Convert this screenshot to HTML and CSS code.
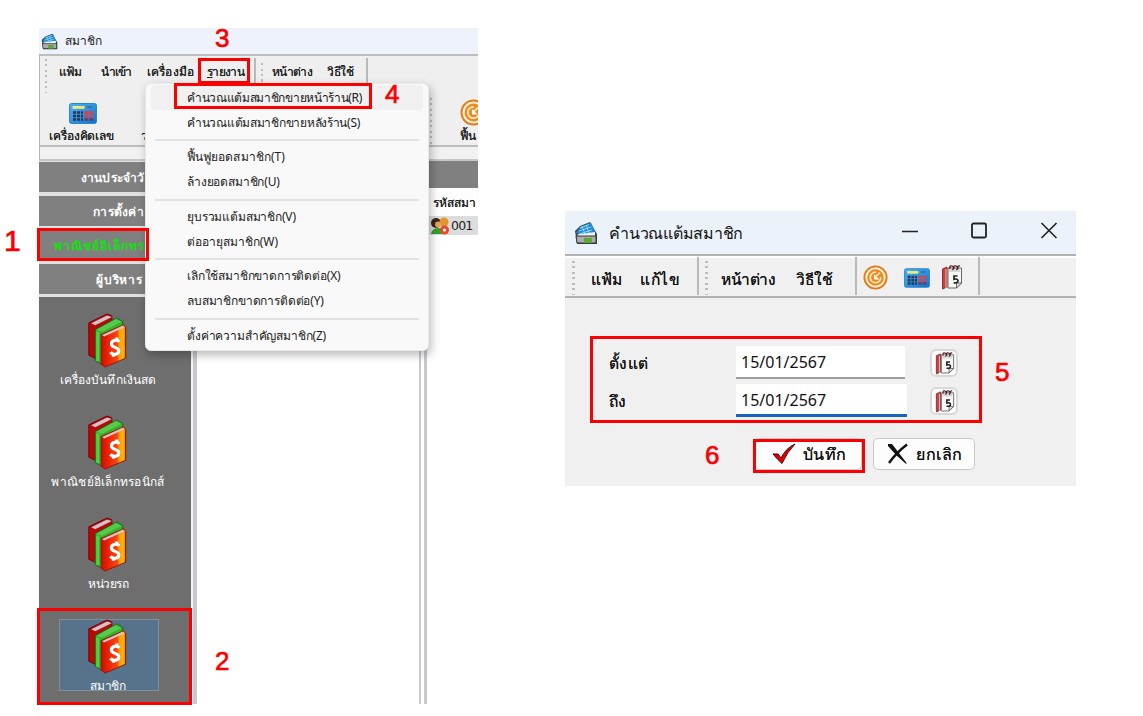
FILE: index.html
```html
<!DOCTYPE html>
<html lang="th">
<head>
<meta charset="utf-8">
<title>สมาชิก</title>
<link rel="stylesheet" href="styles.css">
</head>
<body>
<svg class="defs" width="0" height="0" aria-hidden="true">
  <defs>
    <linearGradient id="red" x1="0" x2="1"><stop offset="0" stop-color="#c80f08"/><stop offset=".35" stop-color="#f02808"/><stop offset=".66" stop-color="#f04a10"/><stop offset=".74" stop-color="#f89a10"/><stop offset=".9" stop-color="#ffb80c"/><stop offset="1" stop-color="#e06a08"/></linearGradient>
    <linearGradient id="blue" x1="0" y1="0" x2="1" y2="1"><stop offset="0" stop-color="#4db4f4"/><stop offset="1" stop-color="#1272cf"/></linearGradient>
    <symbol id="books" viewBox="0 0 40 56">
      <path d="M1.500 10L20 1l5 2v35L8 46l-6.500-3z" fill="#b80808" stroke="#700" stroke-width="1"/>
      <path d="M4 10.500L20 2.500l5 1.500L8 12.500z" fill="#cfc3cb"/>
      <path d="M8 17L30 5l6 4v34L14 52l-6-4z" fill="#2fb52a" stroke="#176312" stroke-width="1"/>
      <path d="M9 17L29 6l6 3L15 19z" fill="#58c94c"/>
      <path d="M10.500 19v30" stroke="#51d044" stroke-width="3"/>
      <path d="M14 22L37 12l2 3v31L18 55l-4-3z" fill="url(#red)" stroke="#9a1206" stroke-width="1"/>
      <path d="M15 22.500L36 13l2 1.500L17 24z" fill="#d8c4cc"/>
      <path d="M32.500 29.500c-2-3-8-2-8 2 0 4.500 7.500 2.500 7.500 7 0 4-6 5-8.500 1.500M30 25v3M26.500 41v3.500" fill="none" stroke="#fff" stroke-width="3.200"/>
    </symbol>
    <symbol id="calc" viewBox="0 0 28 21">
      <rect x=".5" y=".5" width="27" height="20" rx="2" fill="url(#blue)" stroke="#2b86d0"/>
      <path d="M3.500 3h12v2.800h-12z" fill="#f0ec7c"/><path d="M18 4h5" stroke="#2a6a9c" stroke-width="1.500"/>
      <path d="M4 9.500h3M8 9.500h3M12 9.500h2M4 13h3M8 13h3M12 13h2M4 16.500h3M8 16.500h3M12 16.500h2" stroke="#2c3550" stroke-width="2.600"/>
      <path d="M15.500 9.500h4M20.500 9.500h3.500M15.500 13h4M20.500 13h3.500" stroke="#e04040" stroke-width="2.800"/>
      <path d="M15.500 16.500h4M20.500 16.500h3.500" stroke="#6c3a56" stroke-width="2.600"/>
    </symbol>
    <symbol id="refresh" viewBox="0 0 26 26">
      <circle cx="13" cy="13" r="12.500" fill="#e07a14"/><circle cx="13" cy="13" r="10.600" fill="#fff0dc"/>
      <circle cx="13" cy="13" r="8.600" fill="#f08a1c"/>
      <path d="M13.500 7.500a5.500 5.500 0 1 0 5 5M17.500 8l-4 4" fill="none" stroke="#ffe9cf" stroke-width="1.700"/>
      <path d="M11.500 9.500v5.500h5.500z" fill="#fff"/>
    </symbol>
    <symbol id="cal" viewBox="0 0 22 26">
      <path d="M1.500 5l4.500-2v20l-4.500 2z" fill="#d43a3e" stroke="#702024" stroke-width=".8"/>
      <path d="M5 5v19" stroke="#e9c0c0" stroke-width="1"/>
      <path d="M7 4h13.500v15l-5 5H7z" fill="#f7f7f5" stroke="#666" stroke-width="1"/>
      <path d="M20.500 19h-5v5z" fill="#ddd" stroke="#555" stroke-width=".8"/>
      <path d="M8 5h11v3H8z" fill="#d8d8d8"/>
      <path d="M9 5q-1-4 2-3t.5 4M13 5q-1-4 2-3t.5 4M17 5q-1-4 2-3" fill="none" stroke="#4a1c1e" stroke-width="1.300"/>
      <path d="M16.500 12h-3.500v3.300q4-1 4 1.500t-4.300 2" fill="none" stroke="#222" stroke-width="1.700"/>
    </symbol>
    <symbol id="app" viewBox="0 0 24 24">
      <path d="M1 10L6 5l10-4 4 7 3 5v10H3z" fill="#3b474f"/>
      <path d="M2 12l4-6 11-4.500 4 9.500-10 3z" fill="#2389d4"/>
      <path d="M6 7l9-3.500M5 10l12-4M5 13l13-4M8 5l3 8M12 4l3 8" stroke="#9bdcff" stroke-width=".9"/>
      <path d="M2 15h20v7H3z" fill="#a9adad" stroke="#333" stroke-width="1"/>
      <path d="M10 17h8v5h-8z" fill="#62a634"/><path d="M3 13.500l18-2.500v3.500H4z" fill="#eef3f4"/>
    </symbol>
  </defs>
</svg>

<main class="page">
  <section class="win member">
    <header class="title"><svg class="app-sm"><use href="#app"/></svg><span class="t">สมาชิก</span></header>
    <div class="tools">
      <nav class="bar">
        <i class="grip"></i>
        <span class="t m1">แฟ้ม</span><span class="t m2">นำเข้า</span><span class="t m3">เครื่องมือ</span><span class="t m4"><u>ร</u>ายงาน</span>
        <i class="rule r1"></i><i class="grip g2"></i>
        <span class="t m5">หน้าต่าง</span><span class="t m6">วิธีใช้</span><i class="rule r2"></i>
      </nav>
      <div class="actions">
        <div class="action calc"><svg><use href="#calc"/></svg><span class="t">เครื่องคิดเลข</span></div>
        <span class="next">ว</span>
        <i class="grip"></i>
        <div class="action restore"><svg><use href="#refresh"/></svg><span class="t">ฟื้น</span></div>
      </div>
    </div>
    <div class="strip"></div>
    <div class="work">
      <aside class="side">
        <div class="group g-a"><span class="t">งานประจำวั</span></div>
        <div class="group g-b"><span class="t">การตั้งค่า</span></div>
        <div class="group g-c"><span class="t">พาณิชย์อิเล็กทร</span></div>
        <div class="group g-d"><span class="t">ผู้บริหาร</span></div>
        <div class="modules">
          <div class="module x1"><svg><use href="#books"/></svg><span class="t">เครื่องบันทึกเงินสด</span></div>
          <div class="module x2"><svg><use href="#books"/></svg><span class="t">พาณิชย์อิเล็กทรอนิกส์</span></div>
          <div class="module x3"><svg><use href="#books"/></svg><span class="t">หน่วยรถ</span></div>
          <div class="module on"><svg><use href="#books"/></svg><span class="t">สมาชิก</span></div>
        </div>
      </aside>
      <i class="split"></i>
      <div class="canvas"></div>
      <i class="split s2"></i>
      <div class="list">
        <div class="list-head"></div>
        <div class="col"><span class="t">รหัสสมา</span></div>
        <div class="row"><svg viewBox="0 0 19 18"><circle cx="6" cy="6" r="5" fill="#3a2618"/><circle cx="14" cy="5" r="4.500" fill="#e2952e"/><circle cx="8" cy="7.500" r="3" fill="#e8a35c"/><path d="M1 17q1-6 7-6t6 6z" fill="#35a02c"/><circle cx="14.500" cy="13" r="4.500" fill="#e8482c"/><circle cx="14.500" cy="13" r="1.600" fill="#fff"/></svg><span>001</span></div>
      </div>
    </div>
  </section>

  <section class="win points">
    <header class="title"><svg class="app-lg"><use href="#app"/></svg><span class="t">คำนวณแต้มสมาชิก</span>
      <svg class="ctl" viewBox="0 0 160 24"><path d="M1 13.500h16M140.500 5l15 15M155.500 5l-15 15" stroke="#222" stroke-width="1.600"/><rect x="71" y="5.500" width="14" height="14" rx="1.500" fill="none" stroke="#222" stroke-width="1.800"/></svg>
    </header>
    <nav class="bar">
      <i class="grip"></i><span class="t n1">แฟ้ม</span><span class="t n2">แก้ไข</span><i class="rule q1"></i>
      <i class="grip g2"></i><span class="t n3">หน้าต่าง</span><span class="t n4">วิธีใช้</span><i class="rule q2"></i>
      <svg class="i1"><use href="#refresh"/></svg><svg class="i2"><use href="#calc"/></svg><svg class="i3"><use href="#cal"/></svg><i class="rule q3"></i>
    </nav>
    <div class="form">
      <div class="range">
        <div class="field"><label class="t from">ตั้งแต่</label><span class="input">15/01/2567</span><button><svg><use href="#cal"/></svg></button></div>
        <div class="field focus"><label class="t to">ถึง</label><span class="input">15/01/2567</span><button><svg><use href="#cal"/></svg></button></div>
      </div>
      <div class="buttons">
        <div class="btn ok"><svg viewBox="0 0 24 20"><path d="M1 10l5 0 3 4Q14 4 23 0 15 8 10 19.500 5 15 1 10z" fill="#e80000" stroke="#400" stroke-width="1"/></svg><span class="t">บันทึก</span></div>
        <div class="btn no"><svg viewBox="0 0 21 20"><path d="M1 0h4L20 19.500h-1.500Q9 12 1 2z" fill="#111"/><path d="M20 .5Q9 9 2 19" fill="none" stroke="#111" stroke-width="2.400"/></svg><span class="t">ยกเลิก</span></div>
      </div>
    </div>
  </section>

  <div class="menu">
    <div class="item hot"><span class="t">คำนวณแต้มสมาชิกขายหน้าร้าน(R)</span></div>
    <div class="item s"><span class="t">คำนวณแต้มสมาชิกขายหลังร้าน(S)</span></div><hr>
    <div class="item restore-sum"><span class="t">ฟื้นฟูยอดสมาชิก(T)</span></div>
    <div class="item"><span class="t">ล้างยอดสมาชิก(U)</span></div><hr>
    <div class="item"><span class="t">ยุบรวมแต้มสมาชิก(V)</span></div>
    <div class="item renew"><span class="t">ต่ออายุสมาชิก(W)</span></div><hr>
    <div class="item"><span class="t">เลิกใช้สมาชิกขาดการติดต่อ(X)</span></div>
    <div class="item"><span class="t">ลบสมาชิกขาดการติดต่อ(Y)</span></div><hr>
    <div class="item"><span class="t">ตั้งค่าความสำคัญสมาชิก(Z)</span></div>
  </div>

  <i class="mark k1"></i><i class="mark k2"></i><i class="mark k3"></i><i class="mark k4"></i><i class="mark k5"></i><i class="mark k6"></i>
  <b class="num b1">1</b><b class="num b2">2</b><b class="num b3">3</b><b class="num b4">4</b><b class="num b5">5</b><b class="num b6">6</b>
</main>
</body>
</html>
```
FILE: styles.css
```css
*{box-sizing:border-box}
body{margin:0;background:#fff;font:12px/16px "Noto Sans",sans-serif;color:#1c1c1c}
svg{display:block;overflow:visible;flex:none}
.defs{position:absolute}
.page{position:relative;display:flex;align-items:flex-start;width:1143px;height:716px;overflow:hidden}
.win{flex:none;overflow:hidden}
.t{white-space:nowrap;display:inline-block;flex:none}
.title{display:flex;align-items:center;background:#edf2fb}
.grip{flex:none;width:3px;background:repeating-linear-gradient(#bcbcbc 0 2px,transparent 2px 5.500px)}
.rule{flex:none;width:2px;background:#b9b9b9}

/* member window */
.member{width:439px;height:676px;margin:28px 0 0 39px;background:#efefef}
.member .title{height:26px;padding-left:2px}
.app-sm{width:17px;height:17px;margin-right:7px}
.tools{height:93px;border-top:2px solid #bdbdbd;border-left:1px solid #b5b5b5;border-bottom:2px solid #bdbdbd}
.member .bar{display:flex;align-items:center;height:32px;text-shadow:0 0 .5px #333}
.member .bar .grip{height:34px;margin:8px 12px 0 5px;width:2px}
.m1,.m4,.m5{letter-spacing:-.67px}
.m2{margin-left:20px;letter-spacing:-1px}.m3{margin-left:16px;letter-spacing:.14px}.m4{margin-left:13px}
.member .r1{height:28px;margin:0 5px 0 10px}
.member .bar .g2{height:22px;margin:4px 9px 0 0}
.m6{margin-left:15px;letter-spacing:-.25px}
.member .r2{height:28px;margin-left:12px}
.actions{display:flex;height:57px;padding-left:9px;text-shadow:0 0 .5px #333}
.action{display:flex;flex-direction:column;align-items:flex-start;flex:none}
.calc{width:92px}
.calc svg{width:28px;height:21px;margin:15px 0 4px 20px}
.calc .t{letter-spacing:-.1px}
.next{margin-top:40px;width:10px}
.actions .grip{height:48px;width:2px;margin:10px 0 0 282px}
.restore svg{width:27px;height:27px;margin:11px 0 2px 28px}
.restore .t{margin-left:28px}
.strip{height:14px;border-left:1px solid #b5b5b5;border-bottom:2px solid #c6c6c6;background:#f1f1f1}
.work{display:flex;height:543px}
.side{width:152px;flex:none;background:#6e6e6e}
.group{height:34px;border-top:1px solid #e2e2e2;border-bottom:3px solid #e2e2e2;background:#808080;color:#fff;display:flex;align-items:center;overflow:hidden;font-weight:bold;white-space:nowrap;padding-top:2px}
.g-a{padding-left:42px;letter-spacing:.13px}
.g-b{padding-left:54px;letter-spacing:.29px}
.g-c{padding-left:15px;color:#0ce40c;letter-spacing:1px}
.g-d{padding-left:57px;letter-spacing:.83px}
.modules{display:flex;flex-direction:column;align-items:center;padding:16px 0 0 0;margin-left:-13px}
.module{display:flex;flex-direction:column;align-items:center;width:100px;height:72px;margin-bottom:30px;color:#fff}
.module svg{width:40px;height:55px;margin:0 4px 4px 0}
.module .t{margin-right:1px}
.x1{letter-spacing:.14px}.x2{letter-spacing:.27px}.x3{letter-spacing:-.5px}
.module.on{background:#56738b;box-shadow:inset 0 0 0 1px #7d909f;letter-spacing:-.2px}
.split{flex:none;width:6px;background:linear-gradient(90deg,#f4f4f4 2.500px,#c8c8d0 2.500px)}
.canvas{flex:none;width:222px;background:#fff}
.s2{width:10px;background:linear-gradient(90deg,#c8c8d0 2px,#fff 2px 5px,#c8c8d0 5px 8px,#fff 8px)}
.list{flex:1;background:#fff;overflow:hidden}
.list-head{height:27px;background:#808080}
.col{height:28px;padding:7px 0 0 4px;white-space:nowrap;text-shadow:0 0 .5px #333;letter-spacing:-.1px}
.row{display:flex;align-items:center;height:19px;background:#dcdcdc;font:12.500px "DejaVu Sans",sans-serif;letter-spacing:-.8px;padding-left:1px}
.row svg{width:19px;height:18px;margin-right:2px}

/* points window */
.points{width:511px;height:275px;margin:211px 0 0 87px;background:#f0f0f0;color:#111}
.points .title{height:43px;font-size:16px;padding-left:9px;background:#ecf2f9;letter-spacing:-.25px}
.app-lg{width:24px;height:24px;margin-right:11px}
.ctl{width:160px;height:24px;margin:-6px 0 0 158px}
.points .bar{display:flex;align-items:center;height:44px;border-top:2px solid #b2b2b2;border-bottom:2px solid #b2b2b2;font-size:15.500px;line-height:20px;text-shadow:0 0 .6px #222;box-shadow:inset 0 2px #fff}
.points .bar .t{padding-top:6px}
.points .bar .grip{height:34px;margin:4px 16px 0 7px}
.n2{margin-left:18px;letter-spacing:.5px}
.q1{height:38px;margin-left:17px}
.points .bar .g2{margin:4px 13px 0 6px}
.n3{letter-spacing:-.5px}
.n4{margin-left:21px}
.q2{height:38px;margin-left:22px}
.i1{width:25px;height:25px;margin:3px 0 0 6px}
.i2{width:26px;height:20px;margin:3px 0 0 16px}
.i3{width:22px;height:26px;margin:2px 0 0 11px}
.q3{height:38px;margin-left:15px}
.form{padding:47px 0 0 44px}
.range{display:flex;flex-direction:column;gap:5px}
.field{display:flex;align-items:center;height:35px;font-size:16px}
.field+.field{margin-top:-2px}
.field label{font-size:15.500px;text-shadow:0 0 .5px #222;padding-top:1px}
.from{letter-spacing:.25px}.to{letter-spacing:-.5px}
.input{width:169px;height:33px;margin-left:auto;background:#fff;border-bottom:2px solid #a0a0a0;padding:6px 0 0 5px;line-height:20px}
.focus .input{width:171px;border-bottom:3px solid #1464c0;margin-right:-2px}
.field button{width:28px;height:28px;margin:1px 118px 0 25px;padding:0 0 0 3px;border:2px solid #d8d8d8;border-radius:6px;background:#fcfcfc}
.field svg{width:20px;height:24px}
.buttons{display:flex;gap:12px;margin:20px 0 0 146px}
.btn{display:flex;align-items:center;width:107px;height:32px;background:#fdfdfd;border:1px solid #cacaca;border-radius:5px;font-size:16px;line-height:20px;text-shadow:0 0 .6px #222}
.ok{padding-left:16px;letter-spacing:.25px}
.ok svg{width:24px;height:20px;margin-right:7px}
.no{width:102px;padding-left:13px;letter-spacing:.6px;margin-left:-1px}
.no svg{width:21px;height:20px;margin-right:8px}

/* drop-down menu over the member window */
.menu{position:absolute;left:145px;top:83px;width:284px;height:268px;padding-top:1px;background:#f9f9f9;border:1px solid #e8e8e8;border-radius:6px;box-shadow:2px 4px 10px rgba(0,0,0,.28)}
.item{display:flex;align-items:center;height:25px;margin:0 5px;padding-left:36px;border-radius:4px;letter-spacing:-.16px}
.hot{background:#f0f0f0;letter-spacing:-.32px}
.s{letter-spacing:-.28px}
.restore-sum{letter-spacing:.08px}
.renew{letter-spacing:-.03px}
.menu hr{margin:4px 9px 3.600px;border:0;height:2px;background:#e2e2e2}

/* callout frames and numbers */
.mark{position:absolute;border:3px solid #fb0000}
.k1{left:37px;top:228px;width:112px;height:33px}
.k2{left:37px;top:608px;width:155px;height:97px}
.k3{left:198px;top:58px;width:52px;height:26px}
.k4{left:174px;top:83px;width:198px;height:26px}
.k5{left:590px;top:336px;width:392px;height:87px}
.k6{left:753px;top:439px;width:112px;height:34px}
.num{position:absolute;font:26px/30px "Liberation Sans",sans-serif;color:#fb0000;-webkit-text-stroke:.7px #fb0000}
.b1{left:4px;top:226px;font-size:30px}
.b2{left:215px;top:646px}
.b3{left:215px;top:23px}
.b4{left:385px;top:79px}
.b5{left:995px;top:357px}
.b6{left:705px;top:440px}
```
